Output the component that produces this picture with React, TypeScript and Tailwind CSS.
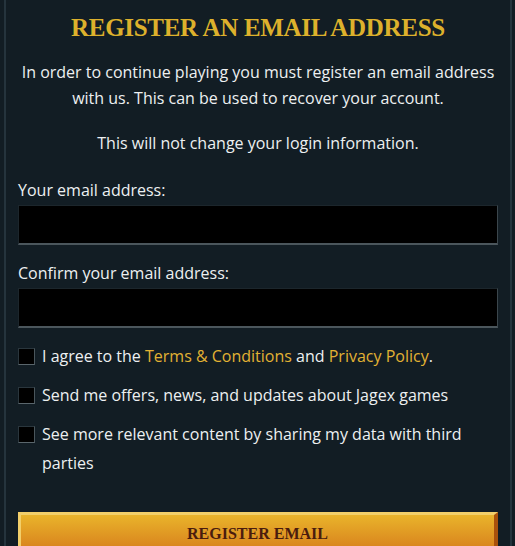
import React from "react";

function Check({ children }: { children: React.ReactNode }) {
  return (
    <label className="flex items-start gap-[7px]">
      <span className="mt-[6px] h-[17px] w-[17px] shrink-0 border border-[#2a363d] border-b-[#5a666c] border-r-[#4a565c] bg-black" />
      <span className="leading-[29px]">{children}</span>
    </label>
  );
}

export default function App() {
  return (
    <div className="min-h-[546px] w-[515px] bg-[#121d24]" style={{ fontFamily: "'Open Sans', Lato, sans-serif" }}>
      <div className="ml-[4px] w-[508px] min-h-[546px] border-x-2 border-x-[#25343d] px-[12px] text-[16px] text-[#edf0f1]">
        <h1
          className="pt-[12px] text-center text-[25px] font-bold leading-[32px] tracking-[-0.3px] text-[#ddb12c]"
          style={{ fontFamily: "'Liberation Serif', serif" }}
        >
          REGISTER AN EMAIL ADDRESS
        </h1>
        <p className="mt-[15px] text-center leading-[26px]">
          In order to continue playing you must register an email address with us. This can be used to recover your account.
        </p>
        <p className="mt-[19px] text-center leading-[26px]">This will not change your login information.</p>
        <div className="mt-[21px] leading-[26px]">Your email address:</div>
        <div className="mt-[2px] h-[40px] w-full border border-[#1c262c] border-b-2 border-b-[#4b565c] border-r-[#3b464c] bg-black" />
        <div className="mt-[15px] leading-[26px]">Confirm your email address:</div>
        <div className="mt-[2px] h-[40px] w-full border border-[#1c262c] border-b-2 border-b-[#4b565c] border-r-[#3b464c] bg-black" />
        <div className="mt-[14px] flex flex-col gap-[10px]">
          <Check>
            I agree to the <span className="text-[#e2b233]">Terms &amp; Conditions</span> and{" "}
            <span className="text-[#e2b233]">Privacy Policy</span>.
          </Check>
          <Check>Send me offers, news, and updates about Jagex games</Check>
          <Check>See more relevant content by sharing my data with third parties</Check>
        </div>
        <button
          className="mt-[34px] flex h-[40px] w-full items-center justify-center border-t-[3px] border-l-[3px] border-r-[4px] border-t-[#f2cf6a] border-l-[#f2cf6a] border-r-[#a9510c] bg-gradient-to-b from-[#e9b42b] to-[#d67d1c] text-[16px] font-bold text-[#4a1c0e]"
          style={{ fontFamily: "'Liberation Serif', serif" }}
        >
          REGISTER EMAIL
        </button>
      </div>
    </div>
  );
}
